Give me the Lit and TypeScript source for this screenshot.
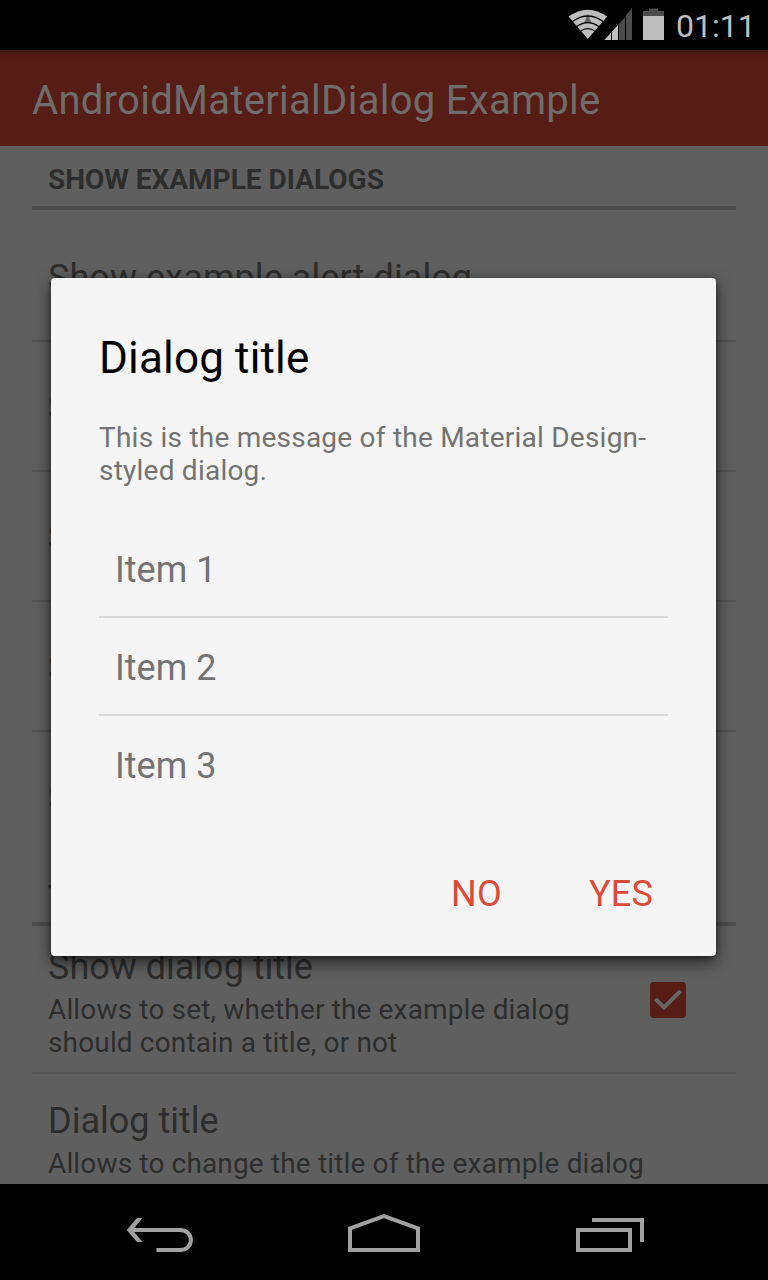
import { LitElement, html, css } from "lit";
import { customElement } from "lit/decorators.js";

@customElement("status-bar")
class StatusBar extends LitElement {
  static styles = css`
    :host { display: flex; justify-content: flex-end; height: 50px; background: #000; }
    .icons { display: block; flex: none; width: 100px; height: 50px; }
    .clock { flex: none; width: 92px; margin-left: 9px; font-size: 32px; line-height: 52px; color: #bebebe; white-space: nowrap; }
    .light { fill: #bebebe; }
    .dim { fill: #4c4c4c; }
    .arc { fill: none; stroke: #000; stroke-width: 1.3; }
    .mid { fill: #666; }
  `;
  render() {
    return html`
      <svg class="icons" viewBox="567 0 100 50">
        <path class="light" d="M568.5 16.6Q587.8 2.8 607.2 16.6L587.8 39Z" />
        <path class="mid" d="M587.8 14L584 23.5Q587.8 22 591.8 23.5Z" />
        <path class="arc" d="M572.5 21.6Q587.8 10.4 603.2 21.6M576.6 26.6Q587.8 18.6 599 26.6M580.4 31.2Q587.8 26 595.2 31.2" />
        <path class="light" d="M604.3 40L611 32.8V40ZM612 31.5L618 25V40H612Z" />
        <path class="dim" d="M619 24L625 17.3V40H619ZM626 15.2L632 8.3V40H626Z" />
        <path class="dim" d="M643 16V11H649V8.5H658V11H664V16Z" />
        <path class="light" d="M643 16H664V40H643Z" />
      </svg>
      <span class="clock">01:11</span>`;
  }
}

@customElement("settings-page")
class SettingsPage extends LitElement {
  static styles = css`
    :host { display: flex; flex-direction: column; overflow: hidden; background: #5f5f5f; color: #2d2d2d; }
    .bar { box-sizing: border-box; flex: none; height: 96px; padding: 5px 0 0 32px; background: linear-gradient(#3d1511, #4e1a14 3px, #561c16 10px); color: #6f6c6c; font-size: 40px; line-height: 91px; letter-spacing: 0.29px; white-space: nowrap; }
    .list { display: flex; flex-direction: column; padding: 0 32px; }
    .category { box-sizing: border-box; flex: none; height: 64px; padding: 7px 16px 0; border-bottom: 4px solid #4c4c4c; font-size: 28px; font-weight: 700; line-height: 53px; }
    .row { box-sizing: border-box; flex: none; height: 130px; padding: 0 16px; border-bottom: 2px solid #535353; font-size: 36px; line-height: 133px; letter-spacing: 0.08px; white-space: nowrap; }
    .first { height: 132px; line-height: 137px; }
    .last { border-color: transparent; }
    .option { box-sizing: border-box; flex: none; display: flex; justify-content: space-between; align-items: flex-start; height: 148px; padding: 20px 50px 0 16px; border-bottom: 2px solid #535353; }
    .wide { height: 110px; padding: 26px 0 0 16px; border: none; }
    .name { font-size: 36px; line-height: 42px; }
    .summary { width: 530px; font-size: 28px; line-height: 33px; letter-spacing: 0.15px; margin-top: 5px; }
    .wide .summary { width: 620px; }
    .check { width: 36px; height: 36px; margin-top: 36px; }
  `;
  render() {
    return html`
      <div class="bar">AndroidMaterialDialog Example</div>
      <div class="list">
        <div class="category">SHOW EXAMPLE DIALOGS</div>
        <div class="row first">Show example alert dialog</div>
        <div class="row">S</div>
        <div class="row">S</div>
        <div class="row">S</div>
        <div class="row last">S</div>
        <div class="category">T</div>
        <div class="option">
          <div>
            <div class="name">Show dialog title</div>
            <div class="summary">Allows to set, whether the example dialog should contain a title, or not</div>
          </div>
          <svg class="check" viewBox="0 0 36 36">
            <rect width="36" height="36" rx="4" fill="#561c16" />
            <path d="M5.500 17L14 25.500L30.500 9" fill="none" stroke="#656565" stroke-width="4" />
          </svg>
        </div>
        <div class="option wide">
          <div>
            <div class="name">Dialog title</div>
            <div class="summary">Allows to change the title of the example dialog</div>
          </div>
        </div>
      </div>`;
  }
}

@customElement("material-dialog")
class MaterialDialog extends LitElement {
  static styles = css`
    :host { box-sizing: border-box; display: flex; flex-direction: column; padding: 53px 48px 0; border-radius: 4px; background: #f5f5f5; box-shadow: 0 6px 16px rgba(0, 0, 0, 0.65), 0 1px 4px rgba(0, 0, 0, 0.3); }
    .title { font-size: 44px; line-height: 54px; letter-spacing: 0.17px; color: #000; }
    .message { margin-top: 36px; font-size: 28px; line-height: 33px; letter-spacing: 0.23px; color: #737373; white-space: nowrap; }
    .items { display: flex; flex-direction: column; margin-top: 33px; }
    .item { box-sizing: border-box; height: 98px; padding-left: 16px; border-bottom: 2px solid #d9d9d9; font-size: 36px; line-height: 101px; color: #737373; }
    .item:last-child { border-color: transparent; }
    .actions { display: flex; justify-content: flex-end; gap: 87px; margin-top: 55px; padding-right: 15px; font-size: 36px; line-height: 50px; letter-spacing: 0.2px; color: #db4b3a; }
  `;
  render() {
    return html`
      <div class="title">Dialog title</div>
      <div class="message">This is the message of the Material Design-<br />styled dialog.</div>
      <div class="items">${[1, 2, 3].map((n) => html`<div class="item">Item ${n}</div>`)}</div>
      <div class="actions"><span>NO</span><span>YES</span></div>`;
  }
}

@customElement("nav-bar")
class NavBar extends LitElement {
  static styles = css`
    :host { display: block; height: 96px; background: #000; }
    .icons { display: block; width: 768px; height: 96px; fill: none; stroke: #a1a1a1; stroke-width: 4; }
    .solid { fill: #a1a1a1; stroke: none; }
  `;
  render() {
    return html`
      <svg class="icons" viewBox="0 1184 768 96">
        <path d="M131 1230H180C194.500 1230 194.500 1250 180 1250H156.500" />
        <path class="solid" d="M137 1218H142.500L132.500 1230L142.500 1242H137L126.700 1230Z" />
        <path d="M350 1250V1228.400L384 1216.200L418 1228.400V1250Z" />
        <path d="M578 1230H630V1250H578ZM592 1220H642V1242" />
      </svg>`;
  }
}

@customElement("app-root")
class AppRoot extends LitElement {
  static styles = css`
    :host { position: relative; display: flex; flex-direction: column; width: 768px; height: 1280px; overflow: hidden; background: #000; font-family: Roboto, "Liberation Sans", sans-serif; }
    .page { flex: 1; min-height: 0; }
    .dialog { position: absolute; left: 51px; top: 278px; width: 665px; height: 678px; }
  `;
  render() {
    return html`
      <status-bar></status-bar>
      <settings-page class="page"></settings-page>
      <nav-bar></nav-bar>
      <material-dialog class="dialog"></material-dialog>`;
  }
}
